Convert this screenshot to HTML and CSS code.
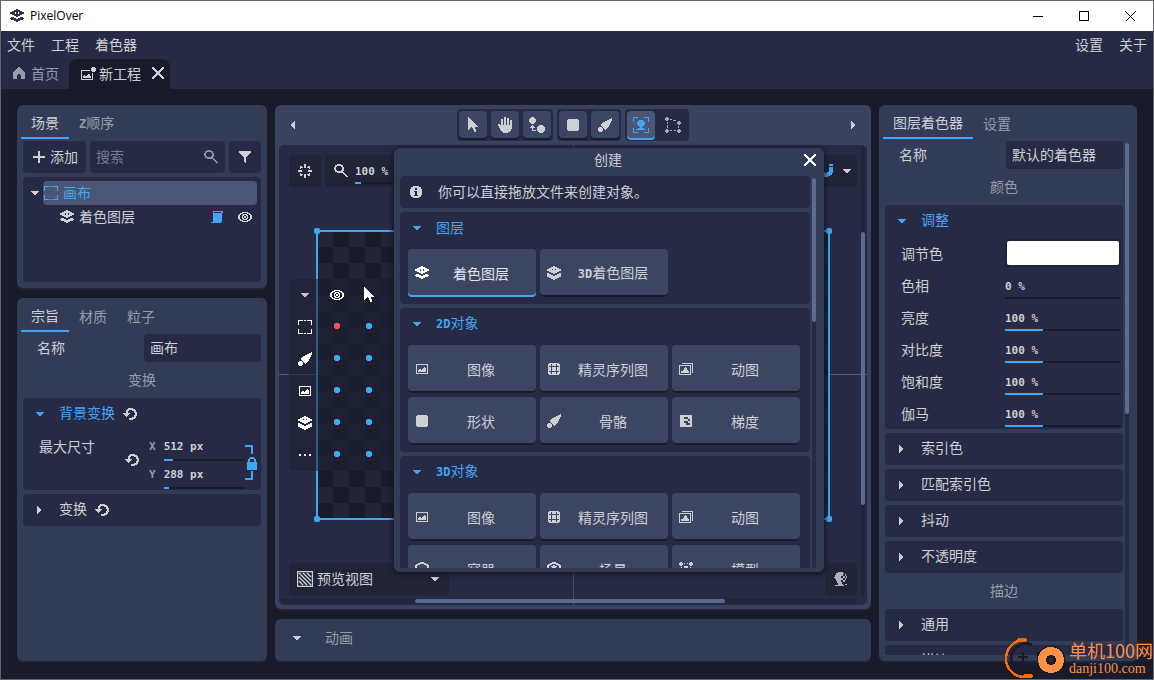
FILE: index.html
```html
<!DOCTYPE html>
<html lang="zh-CN">
<head>
<meta charset="utf-8">
<title>PixelOver</title>
<link rel="stylesheet" href="styles.css">
</head>
<body>
<svg class="sprite" aria-hidden="true">
  <symbol id="layers" viewBox="0 0 14 14"><path fill-rule="evenodd" d="M6 0h2v1h2v1h2v1h2v2h-2v1h-2v1H8v1H6V7H4V6H2V5H0V3h2V2h2V1h2zM5 3v2h1V3zM8 3v2h1V3zM1 8h3v1h2v1h2V9h2V8h3v1h1v1h-1v1h-3v1H8v1H6v-1H4v-1H1v-1H0V9h1z"/></symbol>
  <symbol id="layers3" viewBox="0 0 14 14"><path fill-rule="evenodd" d="M6 0h2v1h2v1h2v1h2v2h-2v1h-2v1H8v1H6V7H4V6H2V5H0V3h2V2h2V1h2zM5 3v1h1V3zM8 3v1h1V3zM0 7h2v1h2v1h2v1h2V9h2V8h2V7h2v4h-2v1h-2v1H8v1H6v-1H4v-1H2v-1H0z"/></symbol>
  <symbol id="home" viewBox="0 0 12 12"><path d="M5 0h2v1h1v1h1v1h1v1h1v1h1v7H8V8H7V7H5v1H4v4H0V5h1V4h1V3h1V2h1V1h1z"/></symbol>
  <symbol id="image" viewBox="0 0 12 10"><path fill-rule="evenodd" d="M0 0h12v10H0zM1 1v8h10V1zM2 8V6h1V5h2v1h1V5h1V4h1V3h1v1h1v4z"/></symbol>
  <symbol id="newimage" viewBox="0 0 15 13"><path d="M0 3h9v1H1v8h10V6h1v7H0zM2 11V9h1V8h1v1h2V8h1V7h2v2h1v2zM10 1h1V0h3v1h1v3h-1v1h-3V4h-1z"/></symbol>
  <symbol id="anim" viewBox="0 0 14 12"><path fill-rule="evenodd" d="M3 0h11v10h-1V1H3zM0 2h12v10H0zM1 3v8h10V3zM2 10V8h2V7h1V5h1V4h1v1h1v2h1v1h1v2z"/></symbol>
  <symbol id="close" viewBox="0 0 12 12"><path d="M0 0h2v1h1v1h1v1h1v1h2V3h1V2h1V1h1V0h2v2h-1v1h-1v1H9v1H8v2h1v1h1v1h1v1h1v2h-2v-1H9v-1H8V9H7V8H5v1H4v1H3v1H2v1H0v-2h1V9h1V8h1V7h1V5H3V4H2V3H1V2H0z"/></symbol>
  <symbol id="plus" viewBox="0 0 12 12"><path d="M5 0h2v5h5v2H7v5H5V7H0V5h5z"/></symbol>
  <symbol id="search" viewBox="0 0 14 14"><path fill-rule="evenodd" d="M3 0h4v1h2v2h1v4H9v1h1v1h1v1h1v1h1v1h1v1h-2v-1h-1v-1h-1v-1H9v-1H8V9H3V8H1V6H0V3h1V1h2zM3 2v1H2v3h1v1h4V6h1V3H7V2z"/></symbol>
  <symbol id="filter" viewBox="0 0 12 12"><path d="M0 0h12v2h-1v1h-1v1H9v1H8v1H7v6H6v-1H5V6H4V5H3V4H2V3H1V2H0z"/></symbol>
  <symbol id="frame" viewBox="0 0 14 14"><path d="M0 0h5v1H1v4H0zM9 0h5v5h-1V1H9zM0 9h1v4h4v1H0zM13 9h1v5H9v-1h4zM6 0h2v1H6zM6 13h2v1H6z"/></symbol>
  <symbol id="script" viewBox="0 0 12 12"><path d="M2 0h10v2h-1v9h-1v1H0v-1h2v-1h0zM3 1v1h7V1z" fill-rule="evenodd"/></symbol>
  <symbol id="eye" viewBox="0 0 14 10"><path fill-rule="evenodd" d="M4 0h6v1h2v1h1v1h1v4h-1v1h-1v1h-2v1H4V9H2V8H1V7H0V3h1V2h1V1h2zM5 1v1H3v1H2v4h1v1h2v1h4V8h2V7h1V3h-1V2H9V1zM5 2h4v1h1v4H9v1H5V7H4V3h1zM6 3v1H5v2h1v1h2V6h1V4H8V3zM6 4h2v2H6z"/></symbol>
  <symbol id="down" viewBox="0 0 8 4"><path d="M0 0h8v1H7v1H6v1H5v1H3V3H2V2H1V1H0z"/></symbol>
  <symbol id="right" viewBox="0 0 4 8"><path d="M0 0h1v1h1v1h1v1h1v2H3v1H2v1H1v1H0z"/></symbol>
  <symbol id="left" viewBox="0 0 4 8"><path d="M4 0v8H3V7H2V6H1V5H0V3h1V2h1V1h1V0z"/></symbol>
  <symbol id="reset" viewBox="0 0 14 12"><path d="M5 0h5v1h2v1h1v2h1v4h-1v2h-1v1h-2v1H6v-2h3V9h2V7h1V5h-1V3H9V2H6v1H5v2h2v1H6v1H5v1H4v1H3V8H2V7H1V6H0V5h3V2h1V1h1z"/></symbol>
  <symbol id="link" viewBox="0 0 12 35"><path fill-rule="evenodd" d="M0 0h8v9H6V2H0zM6 26h2v9H0v-2h6zM5 12h4v1h1v1h1v3h1v8H2v-8h1v-3h1v-1h1zM5 14v3h4v-3z"/></symbol>
  <symbol id="pointer" viewBox="0 0 10 16"><path d="M0 0h1v1h1v1h1v1h1v1h1v1h1v1h1v1h1v1h1v1h1v1H7v2h1v3H6v-2H5v-2H4v-1H3v1H2v1H1v1H0z"/></symbol>
  <symbol id="hand" viewBox="0 0 14 16"><path d="M3 2h2v6h1V0h2v8h1V1h2v7h1V3h2v9h-1v2h-1v1h-2v1H5v-1H4v-1H3v-1H2v-2H1V9H0V7h2v1h1z"/></symbol>
  <symbol id="move" viewBox="0 0 16 16"><path d="M2 0h3v1h1v1h1v3H6v1H5v1H2V6H1V5H0V2h1V1h1zM3 8h1v1h1v1h1v1H4v2h3v1H3v-3H1v-1h1V9h1zM10 8h4v1h1v1h1v4h-1v1h-1v1h-4v-1H9v-1H8v-4h1V9h1z"/></symbol>
  <symbol id="square" viewBox="0 0 12 12"><path d="M1 0h10v1h1v10h-1v1H1v-1H0V1h1z"/></symbol>
  <symbol id="bone" viewBox="0 0 14 14"><path d="M13 0h1v3h-1v2h-1v2h-1v2h-1v1H9v1H8v1H7v-1H6v-1H5V9H4V8H3V6h1V5h1V4h2V3h2V2h2V1h2zM1 9h3v1h1v3H4v1H1v-1H0v-3h1z"/></symbol>
  <symbol id="target" viewBox="0 0 16 16"><path d="M0 0h5v1H1v4H0zM11 0h5v5h-1V1h-4zM0 11h1v4h4v1H0zM15 11h1v5h-5v-1h4zM6 3h4v1h1v1h1v3h-1v1h-1v1H9v1h2v1h2v1H3v-1h2v-1h2v-1H6V9H5V8H4V5h1V4h1z"/></symbol>
  <symbol id="mesh" viewBox="0 0 16 16"><path d="M1 0h2v1h1v2H3v1H1V3H0V1h1zM13 4h2v1h1v2h-1v1h-2V7h-1V5h1zM1 12h2v1h1v2H3v1H1v-1H0v-2h1zM13 12h2v1h1v2h-1v1h-2v-1h-1v-2h1zM5 2h2v1H5zM8 3h3v1H8zM2 5h1v2H2zM2 8h1v3H2zM13 9h1v2h-1zM5 13h2v1H5zM9 13h2v1H9z"/></symbol>
  <symbol id="center" viewBox="0 0 14 14"><path d="M6 0h2v4H6zM6 10h2v4H6zM0 6h4v2H0zM10 6h4v2h-4zM2 2h2v1h1v1H3v1H2zM9 3h1V2h2v3h-1V4H9zM2 9h1v1h2v1H4v1H2zM11 9h1v3h-2v-1H9v-1h2z"/></symbol>
  <symbol id="info" viewBox="0 0 12 12"><path fill-rule="evenodd" d="M3 0h6v1h2v2h1v6h-1v2H9v1H3v-1H1V9H0V3h1V1h2zM5 2v2h2V2zM4 5v1h1v3H4v1h4V9H7V5z"/></symbol>
  <symbol id="gridi" viewBox="0 0 12 12"><path fill-rule="evenodd" d="M1 0h10v1h1v10h-1v1H1v-1H0V1h1zM3 1v2H1v1h2v4H1v1h2v2h1V9h4v2h1V9h2V8H9V4h2V3H9V1H8v2H4V1zM4 4h4v4H4z"/></symbol>
  <symbol id="gradient" viewBox="0 0 12 12"><path fill-rule="evenodd" d="M0 0h12v12H0zM4 2v2h2v2H4v2h2v2h4V8H8V6h2V4H8V2zM6 4h2v2H6z"/></symbol>
  <symbol id="box" viewBox="0 0 14 14"><path fill-rule="evenodd" d="M5 0h4v1h2v1h2v1h1v8h-1v1h-2v1H9v1H5v-1H3v-1H1v-1H0V3h1V2h2V1h2zM5 2v1H3v1H2v6h3v2h4v-2h3V4h-1V3H9V2z"/></symbol>
  <symbol id="scene" viewBox="0 0 14 14"><path fill-rule="evenodd" d="M5 0h4v1h2v1h2v1h1v8h-1v1h-2v1H9v1H5v-1H3v-1H1v-1H0V3h1V2h2V1h2zM5 2v1H3v1H2v6h3v2h4v-2h3V4h-1V3H9V2zM6 3h2v1h2v1H9v3H5V5H4V4h2z"/></symbol>
  <symbol id="model" viewBox="0 0 14 14"><path d="M1 0h2v1h1v2H3v1H1V3H0V1h1zM11 0h2v1h1v2h-1v1h-2V3h-1V1h1zM5 1h1v1H5zM8 1h1v1H8zM5 4h4v4H5zM2 5h1v2H2zM11 5h1v2h-1zM0 10h4v4H0zM10 10h4v4h-4z"/></symbol>
  <symbol id="hatch" viewBox="0 0 16 16"><path shape-rendering="auto" d="M.5.5h15v15H.5zM2 2l12 12M6 2l8 8M10 2l4 4M2 6l8 8M2 10l4 4" fill="none" stroke="currentColor" stroke-width="1.4"/></symbol>
  <symbol id="dither" viewBox="0 0 14 14"><path d="M4 0h5v1h1v1H9v2H7v2h2v2H7v2h1v2h1v1h1v1H1v-1h3v-2H3V9H2V7H1V6H0V5h1V3h1V1h2zM9 4h2v2H9zM11 2h1v2h-1zM12 4h1v2h-1zM11 6h1v2h-1zM9 8h2v2H9zM11 12h2v1h-2z"/></symbol>
  <symbol id="magnet" viewBox="0 0 14 14"><path d="M0 0h4v2H0zM10 0h4v2h-4zM0 3h4v5h2v1h2V8h2V3h4v6h-1v2h-2v1H9v1H5v-1H3v-1H1V9H0z"/></symbol>
  <symbol id="dots" viewBox="0 0 12 2"><path d="M0 0h2v2H0zM5 0h2v2H5zM10 0h2v2h-2z"/></symbol>
  <symbol id="dot" viewBox="0 0 6 6"><path d="M1 0h4v1h1v4H5v1H1V5H0V1h1z"/></symbol>
</svg>

<div class="window">
  <header class="titlebar">
    <svg class="i15 logo"><use href="#layers"/></svg>
    <h1>PixelOver</h1>
    <button class="winbtn" aria-label="最小化"><svg width="10" height="10"><path d="M0 5h10v1H0z"/></svg></button>
    <button class="winbtn" aria-label="最大化"><svg width="10" height="10"><path fill="none" stroke="#000" d="M.5.5h9v9h-9z"/></svg></button>
    <button class="winbtn" aria-label="关闭"><svg width="11" height="11" shape-rendering="auto"><path fill="none" stroke="#000" d="M.5.5l10 10M10.500 .5l-10 10"/></svg></button>
  </header>

  <nav class="menubar">
    <button>文件</button><button>工程</button><button>着色器</button>
    <span class="grow"></span>
    <button>设置</button><button>关于</button>
  </nav>
  <div class="doctabs">
    <button class="doctab muted"><svg class="i12"><use href="#home"/></svg>首页</button>
    <div class="doctab current"><svg class="i15x13"><use href="#newimage"/></svg><span>新工程</span><button aria-label="关闭标签"><svg class="i12"><use href="#close"/></svg></button></div>
  </div>

  <main class="workspace">
    <div class="column">
      <section class="panel">
        <div class="tabs"><button class="tab active">场景</button><button class="tab"><b class="num">Z</b>顺序</button></div>
        <div class="pad stack">
          <div class="tools">
            <button class="field add"><svg class="i12"><use href="#plus"/></svg><span>添加</span></button>
            <label class="field searchbox"><input type="text" placeholder="搜索" aria-label="搜索"><svg class="i14"><use href="#search"/></svg></label>
            <button class="field filter" aria-label="筛选"><svg class="i12"><use href="#filter"/></svg></button>
          </div>
          <ul class="tree">
            <li><svg class="down"><use href="#down"/></svg><span class="node selected"><svg class="i14"><use href="#frame"/></svg><span>画布</span></span></li>
            <li><span class="node child"><svg class="i14"><use href="#layers"/></svg><span>着色图层</span><span class="grow"></span><svg class="i12 blue"><use href="#script"/></svg><svg class="eye"><use href="#eye"/></svg></span></li>
          </ul>
        </div>
      </section>

      <section class="panel fill">
        <div class="tabs"><button class="tab active">宗旨</button><button class="tab">材质</button><button class="tab">粒子</button></div>
        <div class="pad">
          <div class="namerow"><label for="node-name">名称</label><input id="node-name" class="field" type="text" value="画布"></div>
          <h2 class="caption">变换</h2>
          <div class="stack">
            <div class="section">
              <div class="sechead open"><svg class="down"><use href="#down"/></svg><span>背景变换</span><svg class="reset"><use href="#reset"/></svg></div>
              <div class="sizerow">
                <span class="sizelabel">最大尺寸</span>
                <svg class="reset"><use href="#reset"/></svg>
                <div class="axes">
                  <label class="axis"><span class="num muted">X</span><span class="slider"><input class="num" type="text" value="512 px"><i style="width:11%"></i></span></label>
                  <label class="axis"><span class="num muted">Y</span><span class="slider"><input class="num" type="text" value="288 px"><i style="width:6%"></i></span></label>
                </div>
                <svg class="link blue"><use href="#link"/></svg>
              </div>
            </div>
            <div class="section"><div class="sechead"><svg class="right"><use href="#right"/></svg><span>变换</span><svg class="reset"><use href="#reset"/></svg></div></div>
          </div>
        </div>
      </section>
    </div>

    <div class="column">
      <section class="panel stage fill">
        <div class="toolbar">
          <button class="side" aria-label="收起左侧"><svg class="right"><use href="#left"/></svg></button>
          <div class="groups">
            <div class="group">
              <button class="tool" aria-label="选择"><svg class="i10x16"><use href="#pointer"/></svg></button>
              <button class="tool" aria-label="平移"><svg class="i14x16"><use href="#hand"/></svg></button>
              <button class="tool" aria-label="变换"><svg class="i16"><use href="#move"/></svg></button>
            </div>
            <div class="group">
              <button class="tool" aria-label="形状"><svg class="i12"><use href="#square"/></svg></button>
              <button class="tool" aria-label="骨骼"><svg class="i14"><use href="#bone"/></svg></button>
            </div>
            <div class="group">
              <button class="tool on" aria-label="对象"><svg class="i16"><use href="#target"/></svg></button>
              <button class="tool flat" aria-label="网格"><svg class="i16"><use href="#mesh"/></svg></button>
            </div>
          </div>
          <button class="side" aria-label="收起右侧"><svg class="right"><use href="#right"/></svg></button>
        </div>

        <div class="viewport">
          <div class="axis-h"></div><div class="axis-v"></div>
          <div class="artboard"><i></i><i></i><i></i><i></i></div>

          <div class="overlay zoomtools">
            <button class="chip center" aria-label="居中"><svg class="i14"><use href="#center"/></svg></button>
            <label class="chip zoom"><svg class="i14"><use href="#search"/></svg><span class="slider"><input class="num" type="text" value="100 %" aria-label="缩放"><i style="width:6px"></i></span></label>
          </div>
          <div class="overlay chip snap"><svg class="i14 blue"><use href="#magnet"/></svg><svg class="down"><use href="#down"/></svg></div>

          <div class="overlay visibility">
            <svg class="down"><use href="#down"/></svg><svg class="eye"><use href="#eye"/></svg><svg class="i10x16"><use href="#pointer"/></svg>
            <svg class="i14"><use href="#frame"/></svg><svg class="dot red"><use href="#dot"/></svg><svg class="dot"><use href="#dot"/></svg>
            <svg class="i14"><use href="#bone"/></svg><svg class="dot"><use href="#dot"/></svg><svg class="dot"><use href="#dot"/></svg>
            <svg class="i12x10"><use href="#image"/></svg><svg class="dot"><use href="#dot"/></svg><svg class="dot"><use href="#dot"/></svg>
            <svg class="i14"><use href="#layers3"/></svg><svg class="dot"><use href="#dot"/></svg><svg class="dot"><use href="#dot"/></svg>
            <svg class="i12x2"><use href="#dots"/></svg><svg class="dot"><use href="#dot"/></svg><svg class="dot"><use href="#dot"/></svg>
          </div>

          <button class="overlay chip preview"><svg class="i16"><use href="#hatch"/></svg><span>预览视图</span><svg class="down"><use href="#down"/></svg></button>
          <button class="overlay chip ditherbtn" aria-label="抖动"><svg class="i14"><use href="#dither"/></svg></button>
          <div class="vbar track"><i></i></div>
          <div class="hbar track"><i></i></div>

          <div class="dialog" role="dialog" aria-label="创建">
            <div class="dialoghead"><h2>创建</h2><button aria-label="关闭"><svg class="i12"><use href="#close"/></svg></button></div>
            <div class="dialogbody">
              <div class="scroller stack">
                <p class="info"><svg class="i12"><use href="#info"/></svg><span>你可以直接拖放文件来创建对象。</span></p>
                <div class="section cards">
                  <div class="sechead open"><svg class="down"><use href="#down"/></svg><span>图层</span></div>
                  <div class="cardgrid">
                    <button class="card on"><svg class="i14"><use href="#layers"/></svg><span>着色图层</span></button>
                    <button class="card"><svg class="i14"><use href="#layers3"/></svg><span><b class="num">3D</b>着色图层</span></button>
                  </div>
                </div>
                <div class="section cards">
                  <div class="sechead open"><svg class="down"><use href="#down"/></svg><span><b class="num">2D</b>对象</span></div>
                  <div class="cardgrid">
                    <button class="card"><svg class="i12x10"><use href="#image"/></svg><span>图像</span></button>
                    <button class="card"><svg class="i12"><use href="#gridi"/></svg><span>精灵序列图</span></button>
                    <button class="card"><svg class="i14x12"><use href="#anim"/></svg><span>动图</span></button>
                    <button class="card"><svg class="i12"><use href="#square"/></svg><span>形状</span></button>
                    <button class="card"><svg class="i14"><use href="#bone"/></svg><span>骨骼</span></button>
                    <button class="card"><svg class="i12"><use href="#gradient"/></svg><span>梯度</span></button>
                  </div>
                </div>
                <div class="section cards">
                  <div class="sechead open"><svg class="down"><use href="#down"/></svg><span><b class="num">3D</b>对象</span></div>
                  <div class="cardgrid">
                    <button class="card"><svg class="i12x10"><use href="#image"/></svg><span>图像</span></button>
                    <button class="card"><svg class="i12"><use href="#gridi"/></svg><span>精灵序列图</span></button>
                    <button class="card"><svg class="i14x12"><use href="#anim"/></svg><span>动图</span></button>
                    <button class="card"><svg class="i14"><use href="#box"/></svg><span>容器</span></button>
                    <button class="card"><svg class="i14"><use href="#scene"/></svg><span>场景</span></button>
                    <button class="card"><svg class="i14"><use href="#model"/></svg><span>模型</span></button>
                  </div>
                </div>
              </div>
              <div class="bar"><i></i></div>
            </div>
          </div>
        </div>
      </section>

      <section class="panel animation"><svg class="down"><use href="#down"/></svg><span class="muted">动画</span></section>
    </div>

    <section class="panel shader">
      <div class="tabs"><button class="tab active">图层着色器</button><button class="tab">设置</button></div>
      <div class="shaderbody">
        <div class="scroller">
          <div class="namerow"><label for="shader-name">名称</label><input id="shader-name" class="field" type="text" value="默认的着色器"></div>
          <h2 class="caption">颜色</h2>
          <div class="stack">
            <div class="section">
              <div class="sechead open"><svg class="down"><use href="#down"/></svg><span>调整</span></div>
              <div class="prop"><label for="tint">调节色</label><input id="tint" type="color" value="#ffffff"></div>
              <div class="prop"><label for="hue">色相</label><span class="slider"><input id="hue" class="num" type="text" value="0 %"></span></div>
              <div class="prop"><label for="lum">亮度</label><span class="slider"><input id="lum" class="num" type="text" value="100 %"><i style="width:33%"></i></span></div>
              <div class="prop"><label for="con">对比度</label><span class="slider"><input id="con" class="num" type="text" value="100 %"><i style="width:33%"></i></span></div>
              <div class="prop"><label for="sat">饱和度</label><span class="slider"><input id="sat" class="num" type="text" value="100 %"><i style="width:33%"></i></span></div>
              <div class="prop"><label for="gam">伽马</label><span class="slider"><input id="gam" class="num" type="text" value="100 %"><i style="width:33%"></i></span></div>
            </div>
            <div class="section"><div class="sechead"><svg class="right"><use href="#right"/></svg><span>索引色</span></div></div>
            <div class="section"><div class="sechead"><svg class="right"><use href="#right"/></svg><span>匹配索引色</span></div></div>
            <div class="section"><div class="sechead"><svg class="right"><use href="#right"/></svg><span>抖动</span></div></div>
            <div class="section"><div class="sechead"><svg class="right"><use href="#right"/></svg><span>不透明度</span></div></div>
          </div>
          <h2 class="caption">描边</h2>
          <div class="stack">
            <div class="section"><div class="sechead"><svg class="right"><use href="#right"/></svg><span>通用</span></div></div>
            <div class="section"><div class="sechead"><svg class="right"><use href="#right"/></svg><span>描边</span></div></div>
          </div>
        </div>
        <div class="bar"><i></i></div>
      </div>
    </section>
  </main>

  <div class="watermark">
    <svg width="64" height="42" viewBox="0 0 64 42" shape-rendering="auto">
      <path d="M28 35A15 15 0 1 1 27 8M32 15a15 15 0 0 1 2 12" fill="none" stroke="#1a1b28" stroke-width="3"/>
      <path d="M24 39.500A18.500 18.500 0 0 1 15 3.500" fill="none" stroke="#ff6a00" stroke-width="2.500"/>
      <ellipse cx="17" cy="3" rx="5" ry="2" fill="#ff6a00"/><ellipse cx="23" cy="39" rx="5" ry="2" fill="#ff6a00"/>
      <path d="M13 20h10M18 15v10" stroke="#1a1b28" stroke-width="1.500"/>
      <circle cx="46" cy="23" r="14.500" fill="#1a1b28"/><circle cx="46" cy="23" r="13" fill="#ff9146"/>
      <circle cx="46" cy="23" r="5" fill="#1a1b28"/><circle cx="46" cy="23" r="2" fill="#3a2a30"/>
    </svg>
    <div><strong>单机100网</strong><span>danji100.com</span></div>
  </div>
</div>
</body>
</html>
```
FILE: styles.css
```css
:root {
  --bg: #1a1b2a;
  --inset: #262a44;
  --panel: #333c57;
  --stage: #3a425f;
  --card: #3c4663;
  --chip: #212337;
  --text: #cfd0d6;
  --muted: #989caa;
  --blue: #41a6f6;
  --thumb: #5d6b8e;
}
* { box-sizing: border-box; }
body {
  margin: 0;
  height: 100vh;
  overflow: hidden;
  background: var(--bg);
  color: var(--text);
  font: 14px/20px "Noto Sans CJK SC", "Noto Sans", sans-serif;
}
h1, h2, p, ul { margin: 0; padding: 0; font-size: 14px; font-weight: 400; list-style: none; }
button, input { font: inherit; color: inherit; background: none; border: 0; padding: 0; margin: 0; outline: 0; min-width: 0; }
svg { display: block; flex: none; fill: currentColor; shape-rendering: crispEdges; }
.sprite { position: absolute; width: 0; height: 0; }
.i10x16 { width: 10px; height: 16px; }
.i12 { width: 12px; height: 12px; }
.i12x10 { width: 12px; height: 10px; }
.i12x2 { width: 12px; height: 2px; }
.i14 { width: 14px; height: 14px; }
.i14x12, .reset { width: 14px; height: 12px; }
.i14x16 { width: 14px; height: 16px; }
.i15 { width: 15px; height: 14px; }
.i15x13 { width: 15px; height: 13px; }
.i16 { width: 16px; height: 16px; }
.eye { width: 14px; height: 10px; }
.down { width: 8px; height: 4px; }
.right { width: 4px; height: 8px; }
.dot { width: 6px; height: 6px; color: var(--blue); }
.red { color: #ff4d4d; }
.blue { color: var(--blue); }
.muted { color: var(--muted); }
.grow { flex: 1; }
.num { font: 700 11px/20px "DejaVu Sans Mono", monospace; }
b.num { font-size: 12px; }

.window { position: relative; height: 100%; display: flex; flex-direction: column; border: 1px solid #66666a; }
.titlebar { display: flex; align-items: center; height: 30px; padding-left: 8px; background: #fff; color: #000; }
.titlebar h1 { flex: 1; margin-left: 6px; font: 12px/20px "Open Sans", sans-serif; }
.logo { color: #2b3350; }
.winbtn { width: 46px; height: 30px; display: grid; place-items: center; }
.menubar { display: flex; align-items: flex-start; gap: 16px; padding: 3px 6px 0; height: 28px; background: var(--inset); }
.doctabs { display: flex; height: 30px; background: var(--inset); padding-left: 12px; gap: 10px; }
.doctab { display: flex; align-items: center; gap: 6px; padding-bottom: 2px; }
.doctab.current { gap: 3px; padding: 0 6px 2px 12px; background: var(--bg); border-radius: 8px 8px 0 0; }
.doctab.current button { margin-left: 8px; }

.workspace { flex: 1; min-height: 0; display: grid; grid-template-columns: 250px minmax(0, 1fr) 258px; gap: 8px; padding: 16px 16px 18px; }
.column { display: flex; flex-direction: column; gap: 10px; min-height: 0; }
.panel { background: var(--panel); border-radius: 6px; box-shadow: 0 2px 0 #202236; }
.fill { flex: 1; min-height: 0; }
.tabs { display: flex; height: 34px; padding: 0 4px; }
.tab { padding: 4px 10px 0; color: var(--muted); border-bottom: 2px solid transparent; }
.tab.active { padding-top: 2px; color: var(--text); border-color: var(--blue); }
.pad { padding: 2px 6px 6px; }
.stack { display: flex; flex-direction: column; gap: 4px; }
.field { background: var(--inset); border-radius: 4px; }
.tools { display: flex; gap: 4px; height: 32px; }
.add { display: flex; align-items: center; gap: 5px; padding: 0 8px 0 10px; }
.add span, .node span, .info span, .animation span { margin-bottom: 2px; }
.searchbox { flex: 1; min-width: 0; display: flex; align-items: center; padding: 0 7px 0 6px; color: #8d91a2; }
.searchbox input { flex: 1; width: 0; padding-bottom: 2px; }
.searchbox input::placeholder { color: #787c90; opacity: 1; }
.filter { width: 32px; display: grid; place-items: center; }
.tree { height: 105px; padding: 4px; background: var(--inset); border-radius: 4px; }
.tree li { display: flex; align-items: center; gap: 4px; padding-left: 4px; }
.node { flex: 1; height: 24px; display: flex; align-items: center; gap: 5px; padding: 0 5px 0 1px; border-radius: 4px; }
.selected { background: #4a5673; color: var(--blue); }
.child { padding-left: 29px; }
.child .eye { margin-left: 10px; }

.namerow { display: grid; grid-template-columns: 1fr 1fr; gap: 4px; height: 28px; }
.namerow label { padding: 3px 0 0 14px; }
.namerow input { width: 100%; padding: 0 6px 2px; }
.caption { height: 36px; line-height: 34px; text-align: center; color: var(--muted); }
.section { background: var(--inset); border-radius: 4px; }
.sechead { display: flex; align-items: center; gap: 8px; height: 32px; padding-left: 14px; }
.sechead span { margin-bottom: 4px; }
.sechead .right { margin-right: 10px; }
.sechead .down { margin: 0 7px 0 -1px; }
.sechead.open { color: var(--blue); height: 32px; }
.sechead .reset { color: var(--text); }
.sizerow { display: flex; padding: 5px 4px 0 16px; height: 60px; }
.sizerow > .reset { margin: 19px 10px 0 0; }
.sizelabel { flex: 1; line-height: 22px; }
.axes { display: grid; gap: 0; align-content: start; }
.axis { display: flex; gap: 8px; width: 96px; height: 28px; }
.axis .num { line-height: 24px; }
.slider { position: relative; flex: 1; display: block; border-bottom: 2px solid var(--bg); }
.slider input { display: block; width: 100%; height: 24px; }
.slider i { position: absolute; left: 0; bottom: -2px; height: 2px; background: var(--blue); }
.axis .slider { height: 26px; }
.link { width: 12px; height: 35px; margin: 10px 0 0; }
.prop { display: grid; grid-template-columns: 1fr 1fr; gap: 4px; height: 32px; align-items: center; padding-right: 2px; }
.prop label { padding-left: 16px; }
.prop .slider { height: 28px; }
.prop .slider input { padding-top: 4px; height: 26px; }
.prop input[type="color"] { width: 100%; height: 28px; padding: 2px; background: var(--chip); border-radius: 3px; }
.prop input[type="color"]::-webkit-color-swatch-wrapper { padding: 0; }
.prop input[type="color"]::-webkit-color-swatch { border: 0; border-radius: 2px; }

.stage { display: flex; flex-direction: column; background: var(--stage); padding: 0 4px 4px; }
.toolbar { display: flex; justify-content: space-between; align-items: center; height: 40px; padding: 0 10px; }
.side { width: 8px; display: grid; place-items: center; }
.groups { display: flex; gap: 4px; }
.group { display: flex; gap: 4px; padding: 2px 2px 3px; background: var(--inset); border-radius: 4px; }
.tool { width: 28px; height: 27px; display: grid; place-items: center; background: var(--card); border-radius: 4px; box-shadow: 0 2px 0 var(--bg); }
.tool.on { background: #4a5673; color: var(--blue); box-shadow: 0 2px 0 var(--blue); }
.tool.flat { background: none; box-shadow: none; color: #a5a8b4; }

/* Editing canvas: the artboard and its floating controls */
.viewport { position: relative; flex: 1; background: var(--inset); border-radius: 5px; }
.axis-h { position: absolute; left: 0; right: 0; top: 50%; height: 1px; margin-top: -1px; background: #4d5a7b; }
.axis-v { position: absolute; top: 0; bottom: 0; left: 50%; width: 1px; background: #414a67; }
.artboard {
  position: absolute; left: calc(50% - 257px); top: calc(50% - 145px); width: 514px; height: 290px;
  border: 2px solid var(--blue);
  background: repeating-conic-gradient(#1a1b28 0 25%, #212336 0 50%) -1px -1px / 32px 32px;
}
.artboard i { position: absolute; width: 6px; height: 6px; border-radius: 2px; background: var(--blue); }
.artboard i:nth-child(1) { left: -4px; top: -4px; }
.artboard i:nth-child(2) { right: -4px; top: -4px; }
.artboard i:nth-child(3) { left: -4px; bottom: -4px; }
.artboard i:nth-child(4) { right: -4px; bottom: -4px; }
.overlay { position: absolute; }
.chip { display: flex; align-items: center; height: 32px; background: var(--chip); border-radius: 4px; }
.zoomtools { left: 10px; top: 10px; display: flex; gap: 4px; }
.center { width: 32px; justify-content: center; }
.zoom { width: 96px; padding: 0 8px 0 9px; gap: 7px; }
.zoom .slider { height: 26px; }
.zoom .slider input { padding-top: 2px; }
.snap { right: 10px; top: 10px; width: 64px; padding: 0 6px; justify-content: flex-end; gap: 10px; }
.visibility {
  left: 10px; bottom: 134px; display: grid; grid-template-columns: repeat(3, 32px); grid-auto-rows: 32px;
  place-items: center; width: 128px; background: rgba(30, 32, 50, .55); border-radius: 4px; color: #fff;
}
.visibility .down { color: #c4c6cf; }
.visibility .dot { margin-bottom: 2px; }
.preview { left: 10px; bottom: 10px; width: 160px; padding: 0 10px 0 8px; gap: 4px; }
.preview span { flex: 1; text-align: left; margin-bottom: 3px; }
.ditherbtn { right: 10px; bottom: 10px; width: 32px; justify-content: center; color: #b0b2ba; }
.track { position: absolute; background: var(--chip); border-radius: 2px; }
.track i { position: absolute; background: var(--thumb); border-radius: 2px; }
.vbar { right: 2px; top: 2px; bottom: 10px; width: 4px; }
.vbar i { left: 0; width: 4px; top: 19%; height: 61%; }
.hbar { left: 2px; right: 10px; bottom: 2px; height: 4px; }
.hbar i { top: 0; height: 4px; left: 23.3%; width: 53.7%; }

.dialog {
  position: absolute; left: 115px; right: 43px; top: 3px; bottom: 33px; display: flex; flex-direction: column;
  padding: 0 6px 4px; background: var(--panel); border-radius: 6px; box-shadow: 0 1px 5px 1px #14151f;
}
.dialoghead { display: flex; align-items: center; height: 28px; flex: none; }
.dialoghead h2 { flex: 1; line-height: 22px; height: 28px; text-align: center; padding-left: 12px; }
.dialoghead button { color: #fff; margin: 0 2px 4px 0; }
.dialogbody { flex: 1; min-height: 0; display: flex; gap: 2px; padding-right: 2px; }
.scroller { flex: 1; min-width: 0; overflow: hidden; }
.dialog .scroller > * { flex: none; }
.info { display: flex; align-items: center; gap: 16px; height: 32px; padding-left: 10px; background: var(--inset); border-radius: 4px; }
.cards { padding: 0 10px 7px 8px; }
.cards .sechead { padding-left: 6px; height: 32px; margin-bottom: 5px; }
.cards .sechead span { margin-bottom: 3px; }
.cardgrid { display: grid; grid-template-columns: repeat(3, minmax(0, 1fr)); gap: 4px; }
.card { display: flex; align-items: center; height: 48px; padding: 0 7px; background: var(--card); border-radius: 4px; box-shadow: inset 0 -2px 0 var(--bg); }
.card .i12, .card .i12x10 { margin: 0 1px; }
.card span { flex: 1; text-align: center; padding-left: 4px; margin-bottom: 1px; }
.card.on { color: #fff; box-shadow: inset 0 -2px 0 var(--blue); }
.card.on span { color: #e4e5ea; }
.bar { position: relative; width: 4px; margin-top: 2px; background: var(--inset); border-radius: 2px; }
.bar i { position: absolute; left: 0; top: 0; width: 4px; height: 37%; background: var(--thumb); border-radius: 2px; }

.animation { display: flex; align-items: center; gap: 24px; height: 42px; padding: 0 18px 4px; }
.shader { display: flex; flex-direction: column; min-height: 0; padding-bottom: 6px; }
.shaderbody { flex: 1; min-height: 0; display: flex; gap: 2px; padding: 2px 8px 0 6px; }
.shaderbody .bar i { height: 53%; }

.watermark { position: absolute; right: 0; bottom: 0; display: flex; align-items: center; color: #ff9146; }
.watermark div { display: flex; flex-direction: column; }
.watermark strong { font: 400 18px/21px "Noto Sans CJK SC", sans-serif; }
.watermark span { font: 14px/16px "Liberation Serif", serif; }
```
